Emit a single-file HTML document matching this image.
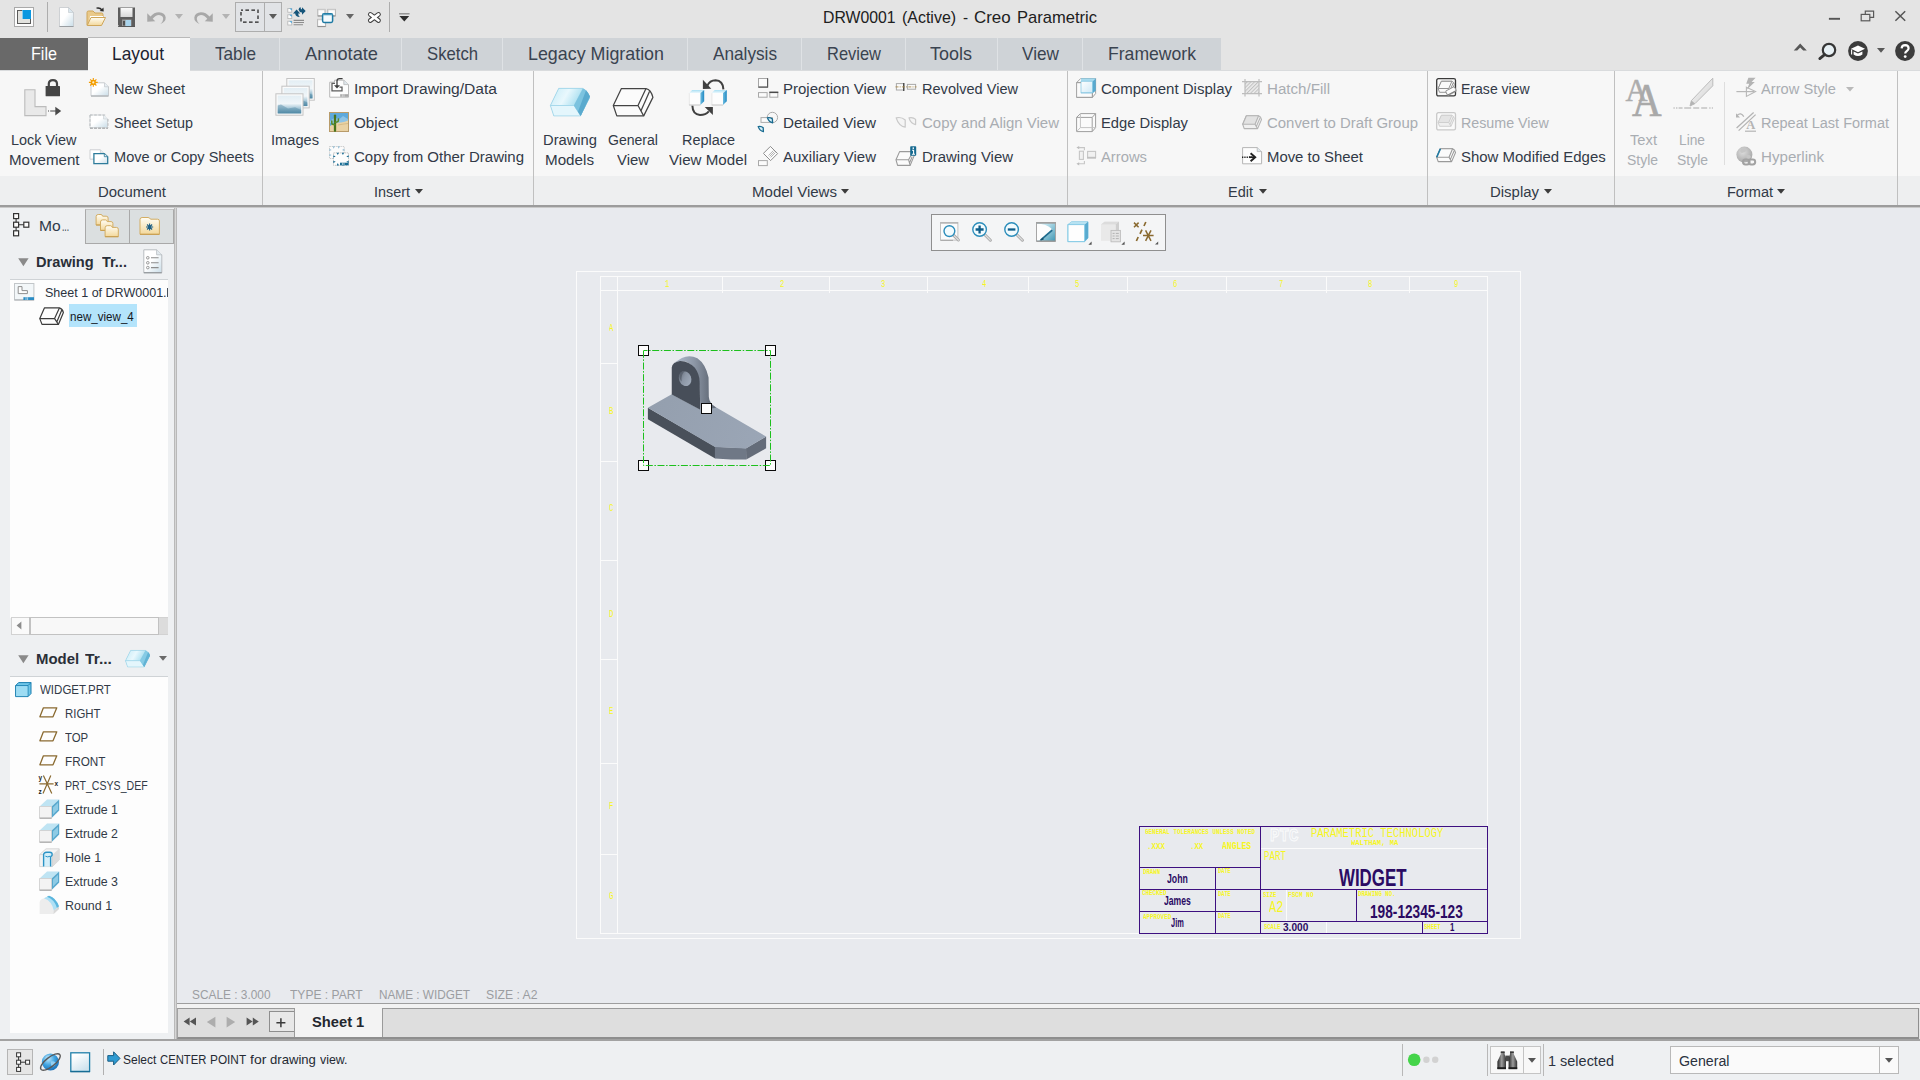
<!DOCTYPE html>
<html><head><meta charset="utf-8"><title>DRW0001 (Active) - Creo Parametric</title><style>
*{margin:0;padding:0;box-sizing:border-box}
html,body{width:1920px;height:1080px;overflow:hidden;background:#e4e4e4;font-family:"Liberation Sans",sans-serif;}
#root{position:relative;width:1920px;height:1080px;overflow:hidden}
.b{position:absolute}
.t{position:absolute;white-space:pre;transform-origin:0 50%;line-height:20px;height:20px;font-family:"Liberation Sans",sans-serif}
svg{position:absolute;overflow:visible}
</style></head><body><div id="root"><div class="b" style="left:0px;top:0px;width:1920px;height:38px;background:#e4e4e4;"></div><div class="b" style="left:0px;top:38px;width:1920px;height:33px;background:#e4e4e4;"></div><div class="b" style="left:0px;top:38px;width:88px;height:32px;background:#696969;"></div><div class="b" style="left:190px;top:38px;width:90px;height:32px;background:#cfd3d7;"></div><div class="b" style="left:280px;top:38px;width:122px;height:32px;background:#cfd3d7;"></div><div class="b" style="left:402px;top:38px;width:101px;height:32px;background:#cfd3d7;"></div><div class="b" style="left:503px;top:38px;width:185px;height:32px;background:#cfd3d7;"></div><div class="b" style="left:688px;top:38px;width:114px;height:32px;background:#cfd3d7;"></div><div class="b" style="left:802px;top:38px;width:104px;height:32px;background:#cfd3d7;"></div><div class="b" style="left:906px;top:38px;width:92px;height:32px;background:#cfd3d7;"></div><div class="b" style="left:998px;top:38px;width:85px;height:32px;background:#cfd3d7;"></div><div class="b" style="left:1083px;top:38px;width:138px;height:32px;background:#cfd3d7;"></div><div class="b" style="left:279px;top:38px;width:1px;height:32px;background:#dfe2e5;"></div><div class="b" style="left:401px;top:38px;width:1px;height:32px;background:#dfe2e5;"></div><div class="b" style="left:502px;top:38px;width:1px;height:32px;background:#dfe2e5;"></div><div class="b" style="left:687px;top:38px;width:1px;height:32px;background:#dfe2e5;"></div><div class="b" style="left:801px;top:38px;width:1px;height:32px;background:#dfe2e5;"></div><div class="b" style="left:905px;top:38px;width:1px;height:32px;background:#dfe2e5;"></div><div class="b" style="left:997px;top:38px;width:1px;height:32px;background:#dfe2e5;"></div><div class="b" style="left:1082px;top:38px;width:1px;height:32px;background:#dfe2e5;"></div><div class="b" style="left:0px;top:70px;width:1920px;height:1px;background:#d9dbdd;"></div><div class="b" style="left:88px;top:37px;width:102px;height:34px;background:#f7f7f7;border-top:1px solid #b9b9b9;"></div><div class="b" style="left:0px;top:71px;width:1920px;height:105px;background:#f7f7f7;"></div><div class="b" style="left:0px;top:176px;width:1920px;height:29px;background:#eeeff0;"></div><div class="b" style="left:0px;top:205px;width:1920px;height:2px;background:#9c9c9c;"></div><div class="b" style="left:0px;top:207px;width:1920px;height:1px;background:#c9c9c9;"></div><div class="b" style="left:262px;top:71px;width:1px;height:134px;background:#c0c0c0;"></div><div class="b" style="left:533px;top:71px;width:1px;height:134px;background:#c0c0c0;"></div><div class="b" style="left:1067px;top:71px;width:1px;height:134px;background:#c0c0c0;"></div><div class="b" style="left:1427px;top:71px;width:1px;height:134px;background:#c0c0c0;"></div><div class="b" style="left:1614px;top:71px;width:1px;height:134px;background:#c0c0c0;"></div><div class="b" style="left:1897px;top:71px;width:1px;height:134px;background:#c0c0c0;"></div><div class="b" style="left:177px;top:208px;width:1743px;height:796px;background:#e8eaee;"></div><div class="b" style="left:0px;top:208px;width:174px;height:832px;background:#eef0f2;"></div><div class="b" style="left:174px;top:208px;width:3px;height:832px;background:#b9b9b9;"></div><div class="b" style="left:175px;top:208px;width:1px;height:832px;background:#d6d6d6;"></div><div class="b" style="left:85px;top:209px;width:89px;height:35px;background:#dbdfe0;border:1px solid #a9a9a9;border-top-color:#c4c4c4;"></div><div class="b" style="left:129px;top:210px;width:1px;height:33px;background:#a9a9a9;"></div><div class="b" style="left:10px;top:279px;width:158px;height:339px;background:#fdfdfd;border-top:1px solid #cfd3d6;"></div><div class="b" style="left:11px;top:617px;width:157px;height:18px;background:#fafafa;border:1px solid #d2d2d2;"></div><div class="b" style="left:158px;top:618px;width:10px;height:16px;background:#dcdcdc;"></div><div class="b" style="left:29px;top:617px;width:130px;height:18px;background:#f8f8f8;border:1px solid #c2c2c2;border-left:2px solid #c2c2c2;"></div><div class="b" style="left:10px;top:676px;width:158px;height:357px;background:#fdfdfd;border-top:1px solid #cfd3d6;"></div><div class="b" style="left:69px;top:304px;width:68px;height:23px;background:#b4e4fb;"></div><div class="b" style="left:177px;top:1003px;width:1743px;height:1px;background:#9e9e9e;"></div><div class="b" style="left:177px;top:1004px;width:1743px;height:4px;background:#f2f2f2;"></div><div class="b" style="left:177px;top:1008px;width:1742px;height:31px;background:#dedede;border-top:1px solid #9a9a9a;border-left:1px solid #a2a2a2;border-right:1px solid #8e8e8e;border-bottom:2px solid #8e8e8e;"></div><div class="b" style="left:295px;top:1004px;width:87px;height:33px;background:#f3f3f3;"></div><div class="b" style="left:294px;top:1008px;width:1px;height:29px;background:#9a9a9a;"></div><div class="b" style="left:382px;top:1008px;width:1px;height:29px;background:#9a9a9a;"></div><div class="b" style="left:269px;top:1011px;width:25px;height:21px;background:#e8e8e8;border:1px solid #8e8e8e;border-right:none;"></div><div class="b" style="left:0px;top:1039px;width:1920px;height:2px;background:#a2a2a2;"></div><div class="b" style="left:0px;top:1041px;width:1920px;height:39px;background:#eef0f2;"></div><div class="b" style="left:103px;top:1049px;width:1px;height:26px;background:#b0b0b0;"></div><div class="b" style="left:1402px;top:1044px;width:1px;height:32px;background:#b8b8b8;"></div><div class="b" style="left:1487px;top:1044px;width:1px;height:32px;background:#b8b8b8;"></div><div class="b" style="left:1543px;top:1044px;width:1px;height:32px;background:#b8b8b8;"></div><div class="b" style="left:7px;top:1049px;width:26px;height:26px;background:#e6e6e6;border:1px solid #b5b5b5;"></div><div class="b" style="left:1490px;top:1046px;width:51px;height:28px;background:#f8f8f8;border:1px solid #c4c4c4;"></div><div class="b" style="left:1523px;top:1047px;width:1px;height:26px;background:#c4c4c4;"></div><div class="b" style="left:1670px;top:1046px;width:229px;height:28px;background:#fafafa;border:1px solid #b9b9b9;"></div><div class="b" style="left:1879px;top:1047px;width:1px;height:26px;background:#b9b9b9;"></div><div class="b" style="left:931px;top:214px;width:235px;height:37px;background:#f4f5f6;border:1px solid #8f8f8f;"></div><svg style="left:0;top:0" width="1920" height="1080" viewBox="0 0 1920 1080" shape-rendering="crispEdges"><g fill="none" stroke="#fbfbfb" stroke-width="1"><rect x="576.5" y="271.5" width="944" height="667"/><rect x="600.5" y="276.5" width="887" height="657"/><path d="M617.5 276.5V933.5 M600.5 290.5H1487.5"/><path d="M722.5 277V293"/><path d="M829.5 277V293"/><path d="M927.5 277V293"/><path d="M1028.5 277V293"/><path d="M1127.5 277V293"/><path d="M1226.5 277V293"/><path d="M1326.5 277V293"/><path d="M1409.5 277V293"/><path d="M600 363.5H618"/><path d="M600 461.5H618"/><path d="M600 560.5H618"/><path d="M600 659.5H618"/><path d="M600 763.5H618"/><path d="M600 854.5H618"/></g><g fill="none" stroke="#fbfbfb" stroke-width="1"><path d="M1261 848.5H1487 M1286.5 890V921 M1326.5 922V933"/></g><g fill="none" stroke="#3d1080" stroke-width="1"><rect x="1139.5" y="826.5" width="348" height="107"/><path d="M1260.5 826.5V933.5 M1139.5 867.5H1260.5 M1139.5 889.5H1487.5 M1139.5 911.5H1260.5 M1215.5 867.5V933.5 M1260.5 921.5H1487.5 M1356.5 889.5V921.5 M1422.5 921.5V933.5"/></g></svg><svg style="left:0;top:0" width="1920" height="1080" viewBox="0 0 1920 1080"><defs><linearGradient id="gLug" gradientUnits="userSpaceOnUse" x1="400" y1="0" x2="612" y2="0"><stop offset="0" stop-color="#a4afbf"/><stop offset="0.45" stop-color="#8d97a6"/><stop offset="1" stop-color="#666f7c"/></linearGradient><linearGradient id="gTop" gradientUnits="userSpaceOnUse" x1="140" y1="500" x2="1048" y2="800"><stop offset="0" stop-color="#949fae"/><stop offset="1" stop-color="#9ba6b6"/></linearGradient><linearGradient id="gHole" gradientUnits="userSpaceOnUse" x1="385" y1="250" x2="470" y2="350"><stop offset="0" stop-color="#626a76"/><stop offset="0.4" stop-color="#8b95a4"/><stop offset="1" stop-color="#a3aebd"/></linearGradient></defs><g transform="translate(630,340) scale(0.129633)"><path d="M138,522 L657,823 L657,914 L138,612Z" fill="#49505a"/><path d="M655,823 L897,835 L897,922 L780,922 L655,914Z" fill="#6f7886"/><path d="M895,835 L1050,745 L1050,836 L897,922Z" fill="#646c79"/><path d="M138,523 L322,418 L545,538 L640,505 L1050,745 L895,837 L655,825Z" fill="url(#gTop)"/><path d="M335,180 L400,138 Q460,110 520,140 Q585,185 606,290 L608,440 Q612,490 665,522 L545,540 L530,300 Q500,200 440,170 Q385,155 335,180Z" fill="url(#gLug)"/><path d="M322,420 L322,215 Q325,172 385,162 Q450,160 500,215 Q535,262 537,320 L542,538Z" fill="#474e59"/><ellipse cx="425" cy="298" rx="47" ry="59" transform="rotate(-22 425 298)" fill="url(#gHole)"/><path d="M382,262 Q395,238 425,240 Q392,262 398,320 Q378,298 382,262Z" fill="#565e6a" opacity="0.8"/></g></svg><svg style="left:0;top:0" width="1920" height="1080" viewBox="0 0 1920 1080" shape-rendering="crispEdges"><rect x="638.7" y="345.7" width="9.6" height="9.6" fill="#fdfdfd" stroke="#0a0a0a" stroke-width="1.4"/><rect x="765.7" y="345.7" width="9.6" height="9.6" fill="#fdfdfd" stroke="#0a0a0a" stroke-width="1.4"/><rect x="638.7" y="460.7" width="9.6" height="9.6" fill="#fdfdfd" stroke="#0a0a0a" stroke-width="1.4"/><rect x="765.7" y="460.7" width="9.6" height="9.6" fill="#fdfdfd" stroke="#0a0a0a" stroke-width="1.4"/><rect x="701.7" y="403.7" width="9.6" height="9.6" fill="#fdfdfd" stroke="#0a0a0a" stroke-width="1.4"/><rect x="643.5" y="350.5" width="127" height="115" fill="none" stroke="#1cc01c" stroke-width="1" stroke-dasharray="7 1.6 1.5 1.6" stroke-dashoffset="3" shape-rendering="auto"/></svg><svg width="0" height="0" style="left:0;top:0"><defs>
<linearGradient id="gPage" x1="0" y1="0" x2="1" y2="1"><stop offset="0.45" stop-color="#ffffff"/><stop offset="1" stop-color="#c9dde8"/></linearGradient>
<linearGradient id="gFold" x1="0" y1="0" x2="0" y2="1"><stop offset="0" stop-color="#fffdf5"/><stop offset="1" stop-color="#f3d89b"/></linearGradient>
<linearGradient id="gCube" x1="0" y1="0" x2="1" y2="1"><stop offset="0" stop-color="#ffffff"/><stop offset="1" stop-color="#cfe9f6"/></linearGradient>
<linearGradient id="gBlue" x1="0" y1="0" x2="1" y2="1"><stop offset="0" stop-color="#e8f7fd"/><stop offset="1" stop-color="#9bd6ef"/></linearGradient>
<linearGradient id="gPic" x1="0" y1="0" x2="0" y2="1"><stop offset="0" stop-color="#e3eef4"/><stop offset="0.45" stop-color="#f1f6f9"/><stop offset="0.7" stop-color="#a9c9d9"/><stop offset="1" stop-color="#4f8aa6"/></linearGradient>
<linearGradient id="gGrey" x1="0" y1="0" x2="0" y2="1"><stop offset="0" stop-color="#fafafa"/><stop offset="1" stop-color="#d8d8d8"/></linearGradient>
</defs></svg><svg style="left:14px;top:7px" width="20" height="20" viewBox="0 0 20 20"><rect x="0.5" y="0.5" width="19" height="19" fill="#fdfdfd" stroke="#a9a9a9"/><rect x="3.5" y="3.5" width="13" height="13" fill="#e2e2de" stroke="#5a5a5a"/><rect x="8" y="3" width="9" height="9" fill="#0b97e0"/><path d="M8.5 3.5V12" stroke="#bfe3f7" stroke-width="0.7"/></svg><div class="b" style="left:47px;top:2px;width:1px;height:30px;background:#adadad"></div><svg style="left:59px;top:7px" width="15" height="20" viewBox="0 0 15 20"><path d="M0.5 0.5H9.5 L14.5 5.5 V19.5 H0.5Z" fill="url(#gPage)" stroke="#c4c8cc" stroke-width="0.8"/><path d="M9.5 0.5V5.5 H14.5 Z" fill="#dbe7ee" stroke="#c0c6cb" stroke-width="0.6"/><path d="M0.5 19.5 H14.5" stroke="#9a9ea2" stroke-width="1"/></svg><svg style="left:86px;top:7px" width="20" height="20" viewBox="0 0 20 20"><path d="M1 18V5.5Q1 4 2.5 4H7l2 2h6.5Q17 6 17 7.5V10" fill="#e9c98a" stroke="#cfa65a" stroke-width="1"/><path d="M4 9h13v8H3z" fill="#fff"/><path d="M1.2 18.5 L5 10.5H19.5L15.5 18.5Z" fill="url(#gFold)" stroke="#cfa65a" stroke-width="1" stroke-linejoin="round"/><path d="M10.5 1.2Q14 0.4 16 3" fill="none" stroke="#2b2b2b" stroke-width="1.3"/><path d="M13.7 3.9L17.7 4.6L17.5 0.6Z" fill="#2b2b2b"/></svg><svg style="left:117px;top:7px" width="19" height="20" viewBox="0 0 19 20"><path d="M1 0.5H18V19.5H2.5L1 18Z" fill="#5d5d5d"/><rect x="3.5" y="1" width="12" height="9" fill="url(#gGrey)"/><rect x="5" y="12.5" width="9.5" height="7" fill="#9a9a9a"/><rect x="8.5" y="13" width="5.5" height="6.5" fill="#a9d4ec"/><rect x="6.3" y="14" width="1.4" height="4.5" fill="#333"/><path d="M1 19.5H18" stroke="#444" stroke-width="0.8"/></svg><svg style="left:147px;top:11px" width="19" height="14" viewBox="0 0 19 14"><path d="M0.25 2.25V10.75L8.25 10.25L5.7 7.7Q8.5 3.9 12 3.9Q16.3 4.4 16.2 8Q16 11 13.4 13Q18.9 11 18.7 6.6Q18 1.4 12 1.2Q7 1.2 3.5 5.5Z" fill="#a8a8a8"/></svg><svg style="left:194px;top:11px" width="19" height="14" viewBox="0 0 19 14"><g transform="translate(19,0) scale(-1,1)"><path d="M0.25 2.25V10.75L8.25 10.25L5.7 7.7Q8.5 3.9 12 3.9Q16.3 4.4 16.2 8Q16 11 13.4 13Q18.9 11 18.7 6.6Q18 1.4 12 1.2Q7 1.2 3.5 5.5Z" fill="#a8a8a8"/></g></svg><svg style="left:175px;top:14.2px" width="8" height="5" viewBox="0 0 8 5"><path d="M0 0H8L4 5Z" fill="#b3b3b3"/></svg><svg style="left:222px;top:14.2px" width="8" height="5" viewBox="0 0 8 5"><path d="M0 0H8L4 5Z" fill="#b3b3b3"/></svg><div class="b" style="left:235px;top:2px;width:47px;height:30px;background:#e1e3e6;border:1px solid #adadad"></div><div class="b" style="left:264px;top:3px;width:1px;height:28px;background:#adadad"></div><svg style="left:240px;top:9px" width="19" height="14" viewBox="0 0 19 14"><rect x="1" y="1" width="17" height="12" fill="none" stroke="#222" stroke-width="1.25" stroke-dasharray="3.6 2.4" stroke-dashoffset="1.6"/></svg><svg style="left:269px;top:14.2px" width="8" height="5" viewBox="0 0 8 5"><path d="M0 0H8L4 5Z" fill="#5a5a5a"/></svg><svg style="left:287px;top:7px" width="19" height="19" viewBox="0 0 19 19"><g fill="#fdfdfd" stroke="#b5b5b5" stroke-width="0.8"><rect x="0.8" y="1.4" width="4" height="3.8"/><rect x="0.8" y="7.8" width="4" height="3.8"/><rect x="0.8" y="14.2" width="4" height="3.8"/></g><g fill="#3aa3e0"><path d="M2.4 1.4H4.8V3.4Z"/><path d="M2.4 7.8H4.8V9.8Z"/><path d="M2.4 14.2H4.8V16.2Z"/></g><g stroke="#8c8c8c" stroke-width="1.1"><path d="M6.6 13.4H17M6.6 15.5H17M6.6 17.7H16"/></g><path d="M9.6 2.4L13.2 6.4H11.2Q11.2 8.6 12.8 9.9Q8.4 9.6 8.2 6.4H6Z" fill="#16557a"/><path d="M18.7 4L15 7.8V5.5Q12.2 5.3 11.5 2.6Q12 0.7 13.4 0.1Q13.5 2.4 15 2.6V0.3Z" fill="#16557a"/></svg><svg style="left:317px;top:8px" width="19" height="19" viewBox="0 0 19 19"><g fill="#fcfcfc" stroke="#b2b2b2" stroke-width="1"><rect x="0.8" y="1.4" width="7.2" height="6.4"/><rect x="10.8" y="1.4" width="7.6" height="6.4"/><rect x="0.6" y="11.4" width="8" height="7"/></g><path d="M0.8 8H8M10.8 8H18.4M0.6 18.6H8.6" stroke="#8e8e8e" stroke-width="1"/><path d="M0.8 1.6H8M10.8 1.6H18.4M0.6 11.6H8.6" stroke="#c9c9c9" stroke-width="1.4"/><rect x="5.6" y="5.8" width="10" height="8.6" rx="1.4" fill="#f4fafd" stroke="#1f7aa3" stroke-width="1.5"/><path d="M5.6 6.6H15.6" stroke="#4c9cc0" stroke-width="1.4"/></svg><svg style="left:346px;top:14.2px" width="8" height="5" viewBox="0 0 8 5"><path d="M0 0H8L4 5Z" fill="#666"/></svg><svg style="left:367px;top:11px" width="15" height="13" viewBox="0 0 15 13"><path d="M3.3 3.4L11.5 9.5M11.5 3.4L3.3 9.5" stroke="#404040" stroke-width="4.7" stroke-linecap="round"/><path d="M3.3 3.4L11.5 9.5M11.5 3.4L3.3 9.5" stroke="#fff" stroke-width="2.7" stroke-linecap="round"/></svg><div class="b" style="left:389px;top:2px;width:1px;height:30px;background:#adadad"></div><svg style="left:399px;top:13px" width="11" height="9" viewBox="0 0 11 9"><path d="M0 0.8H10.6" stroke="#8a8a8a" stroke-width="1.3"/><path d="M0.4 3H10.2L5.3 8.6Z" fill="#2e2e2e"/></svg><svg style="left:22px;top:78px" width="42" height="40" viewBox="0 0 42 40"><path d="M2.8 11.8H13V28.6H24V37.6H2.8Z" fill="#e9e9e9" stroke="#bcbcbc" stroke-width="1.1"/><rect x="23.6" y="7.9" width="14.4" height="10.4" rx="0.6" fill="#454545"/><path d="M26.8 8.5V5.8Q26.8 2.2 30.9 2.2Q35 2.2 35 5.8V8.5" fill="none" stroke="#454545" stroke-width="2.2"/><path d="M26 33H34" stroke="#4a4a4a" stroke-width="1.2" stroke-dasharray="1 1.2 5 0"/><path d="M33.3 28.7V37.5L39.2 33.1Z" fill="#4a4a4a"/></svg><svg style="left:89px;top:78px" width="21" height="19" viewBox="0 0 21 19"><g transform="translate(1.5,4.3)"><path d="M0.5 0.5H14 L18 4.5 V13.5 H0.5Z" fill="url(#gPage)" stroke="#c2c6ca" stroke-width="0.9"/><path d="M14 0.5V4.5 H18" fill="#e7eef2" stroke="#c2c6ca" stroke-width="0.7"/><path d="M0.5 13.8H18" stroke="#a5a9ad" stroke-width="1"/></g><g transform="translate(4.3,4.4)"><circle r="2.6" fill="#f6a800"/><g stroke="#f39a00" stroke-width="1.1"><path d="M-4.4 0H4.4M0 -4.4V4.4M-3.1 -3.1L3.1 3.1M-3.1 3.1L3.1 -3.1"/></g><circle r="1.1" fill="#fff3c8"/></g></svg><svg style="left:88.5px;top:113.8px" width="20" height="15" viewBox="0 0 20 15"><g transform="translate(0.5,0.5)"><path d="M0.5 0.5H14 L18 4.5 V13.1 H0.5Z" fill="url(#gPage)" stroke="#cfd2d5" stroke-width="0.9"/><path d="M14 0.5V4.5 H18" fill="#e7eef2" stroke="#cfd2d5" stroke-width="0.7"/></g><path d="M1 1H17M1 1V14M1 14.2H19M19 5V14" fill="none" stroke="#b9bdc0" stroke-width="1" stroke-dasharray="2.6 1.6"/><path d="M1 14.2H19" stroke="#a6a9ac" stroke-width="1" stroke-dasharray="3 1"/></svg><svg style="left:88.5px;top:149px" width="20" height="16" viewBox="0 0 20 16"><g transform="translate(0.5,0.3)"><path d="M0.5 0.5H10.9 L14.1 3.7 V9.9 H0.5Z" fill="url(#gPage)" stroke="#c8cbce" stroke-width="0.9"/><path d="M10.9 0.5V3.7 H14.1" fill="#e7eef2" stroke="#c8cbce" stroke-width="0.7"/></g><g transform="translate(4.3,4.1)"><path d="M0.6 0.6H11 L14.4 3.6 V10.6 H0.6Z" fill="url(#gPage)" stroke="#2e7c9b" stroke-width="1.3"/><path d="M11 0.6V3.6H14.4" fill="#e7eef2" stroke="#2e7c9b" stroke-width="0.8"/></g></svg><svg style="left:275px;top:78px" width="41" height="39" viewBox="0 0 41 39"><g transform="translate(11.3,0)"><rect x="0.5" y="0.5" width="27.5" height="21.7" fill="#fbfbfb" stroke="#c4c4c4" stroke-width="1"/><rect x="2.3" y="2.3" width="23.9" height="18.1" fill="url(#gPic)"/><path d="M2.3 12.485 L5.7 11.35 L12.825 15.436 L19.95 14.074 L26.2 16.798 V20.4 H2.3Z" fill="#4f87a3" opacity="0.45"/></g><g transform="translate(6.4,7.7)"><rect x="0.5" y="0.5" width="27.3" height="21.7" fill="#fbfbfb" stroke="#c4c4c4" stroke-width="1"/><rect x="2.3" y="2.3" width="23.7" height="18.1" fill="url(#gPic)"/><path d="M2.3 12.485 L5.66 11.35 L12.735 15.436 L19.81 14.074 L26 16.798 V20.4 H2.3Z" fill="#4f87a3" opacity="0.45"/></g><g transform="translate(0.4,15.3)"><rect x="0.5" y="0.5" width="27.1" height="21.4" fill="#fbfbfb" stroke="#c4c4c4" stroke-width="1"/><rect x="2.3" y="2.3" width="23.5" height="17.8" fill="url(#gPic)"/><path d="M2.3 12.32 L5.62 11.2 L12.645 15.232 L19.67 13.888 L25.8 16.576 V20.1 H2.3Z" fill="#4f87a3" opacity="0.45"/></g></svg><svg style="left:329px;top:78px" width="21" height="21" viewBox="0 0 21 21"><path d="M0.7 4.2H5.5V2.2H14.8L19.5 6.6V19.2H0.7Z" fill="#fdfdfd" stroke="#b9b9b9" stroke-width="1"/><path d="M14.8 2.2V6.6H19.5" fill="#dfe7ec" stroke="#b9b9b9" stroke-width="0.8"/><path d="M6 5.3H3V12.8H13V9.2H10.5" fill="none" stroke="#5e5e5e" stroke-width="1.3"/><path d="M13.6 0.7H10.4Q8 0.7 8 3V8.5" fill="none" stroke="#3c3c3c" stroke-width="1.3"/><path d="M5 7.2H11L8 10.6Z" fill="#3c3c3c"/><rect x="11.2" y="16.2" width="8" height="2.6" fill="#a8a8a8"/><path d="M13.3 16.2V18.8M15 16.2V18.8" stroke="#e8e8e8" stroke-width="0.7"/></svg><svg style="left:329px;top:112px" width="20" height="20" viewBox="0 0 20 20"><rect x="0.5" y="0.5" width="19" height="19" fill="#5da9dc" stroke="#b89b6a" stroke-width="1"/><path d="M1 9 L6 5.5 L10 7.5 L14 4 L19 7 V11H1Z" fill="#8cc3e6"/><path d="M1 14 Q6 10.5 12 10.5 Q16 10.2 19 8.5 V19H1Z" fill="#e9d2a4"/><path d="M9 13 Q14 12 19 11.5" stroke="#cfb582" fill="none" stroke-width="0.8"/><path d="M6 3.6V18.8" stroke="#48741c" stroke-width="2.3" stroke-linecap="round"/><path d="M2.8 9V11.2Q2.8 12.6 6 12.8" fill="none" stroke="#5a8a26" stroke-width="1.5" stroke-linecap="round"/><path d="M9.4 7V8.6Q9.4 10 6 10.4" fill="none" stroke="#5a8a26" stroke-width="1.5" stroke-linecap="round"/></svg><svg style="left:329px;top:146px" width="21" height="20" viewBox="0 0 21 20"><g opacity="0.8"><rect x="0.5" y="0.5" width="14.7" height="12" fill="#fdfdfd" stroke="#b4b4b4" stroke-width="0.8" stroke-dasharray="1.4 0.8"/><path d="M3.51 0.3l1.2 2.4l1.2-2.4Z M3.51 12.7l1.2-2.4l1.2 2.4Z" fill="#7fb1cc"/><path d="M8.534 0.3l1.2 2.4l1.2-2.4Z M8.534 12.7l1.2-2.4l1.2 2.4Z" fill="#7fb1cc"/><path d="M0.3 2.8l2.4 1.1l-2.4 1.1Z M15.4 2.8l-2.4 1.1l2.4 1.1Z" fill="#7fb1cc"/><path d="M0.3 8l2.4 1.1l-2.4 1.1Z M15.4 8l-2.4 1.1l2.4 1.1Z" fill="#7fb1cc"/></g><g transform="translate(4,6.4)"><g opacity="1"><rect x="0.5" y="0.5" width="15" height="12.4" fill="#fdfdfd" stroke="#b4b4b4" stroke-width="0.8" stroke-dasharray="1.4 0.8"/><path d="M3.6 0.3l1.2 2.4l1.2-2.4Z M3.6 13.1l1.2-2.4l1.2 2.4Z" fill="#176b93"/><path d="M8.72 0.3l1.2 2.4l1.2-2.4Z M8.72 13.1l1.2-2.4l1.2 2.4Z" fill="#176b93"/><path d="M0.3 2.92l2.4 1.1l-2.4 1.1Z M15.7 2.92l-2.4 1.1l2.4 1.1Z" fill="#176b93"/><path d="M0.3 8.28l2.4 1.1l-2.4 1.1Z M15.7 8.28l-2.4 1.1l2.4 1.1Z" fill="#176b93"/></g><rect x="7" y="10.3" width="8.6" height="2.6" fill="#176b93"/><path d="M9.4 10.3V12.9M11 10.3V12.9" stroke="#e8f3f8" stroke-width="0.7"/></g></svg><svg style="left:548px;top:84px" width="46" height="36" viewBox="0 0 46 36"><defs><linearGradient id="gSlabT" x1="0" y1="0" x2="1" y2="0.3"><stop offset="0" stop-color="#c4ebf7"/><stop offset="0.55" stop-color="#e9f8fd"/><stop offset="1" stop-color="#a9dff0"/></linearGradient></defs><path d="M10.7 4.4H35 Q43 10.5 41.8 14 L32.7 31.9 H5.8 L2.4 21.5Z" fill="#6cb9d8"/><path d="M10.7 4.4H35L26 21.5H2.4Z" fill="url(#gSlabT)" stroke="#9fd6ea" stroke-width="0.8"/><path d="M2.4 21.5H26L32.7 31.9H5.8Z" fill="#e4f6fc" stroke="#9fd6ea" stroke-width="0.8"/><path d="M35 4.4 Q38.5 5 41.8 12.6 L32.7 31.9 L26 21.5Z" fill="#7cc3df"/><path d="M38 6.2 Q40.8 9 41.8 12.6 L32.7 31.9 L30 27.8Z" fill="#5aaace"/></svg><svg style="left:611px;top:84px" width="46" height="36" viewBox="0 0 46 36"><g fill="#fbfbfb" stroke="#444" stroke-width="1.25" stroke-linejoin="round"><path d="M10.4 4.6H35 Q40 5.5 41.9 13.4 L32.7 31.9 H5.8 L2.3 21.5Z"/><path d="M2.3 21.5H27L35 4.6M27 21.5L32.7 31.9" fill="none"/><path d="M38.6 7.2 L30 26.8" fill="none"/></g></svg><svg style="left:687px;top:77px" width="42" height="42" viewBox="0 0 42 42"><g transform="translate(2.1,13)"><defs><linearGradient id="gCt" x1="0" y1="0" x2="0" y2="1"><stop offset="0" stop-color="#a9dff4"/><stop offset="1" stop-color="#eef9fd"/></linearGradient><linearGradient id="gCr" x1="0" y1="0" x2="1" y2="0"><stop offset="0" stop-color="#6fbde0"/><stop offset="1" stop-color="#1f88c2"/></linearGradient></defs><path d="M0 3.1L3 0H15.1V11.2L11.3 14.9H0Z" fill="#fdfdfd"/><path d="M0 3.1L3 0H15.1L11.3 3.1Z" fill="url(#gCt)"/><path d="M11.3 3.1L15.1 0V11.2L11.3 14.9Z" fill="url(#gCr)"/><path d="M0.2 3.1V14.9" stroke="#d9d9d9" stroke-width="0.6"/><path d="M0 15H11.3" stroke="#bdbdbd" stroke-width="0.9"/></g><g transform="translate(24.7,13)"><defs><linearGradient id="gCt" x1="0" y1="0" x2="0" y2="1"><stop offset="0" stop-color="#a9dff4"/><stop offset="1" stop-color="#eef9fd"/></linearGradient><linearGradient id="gCr" x1="0" y1="0" x2="1" y2="0"><stop offset="0" stop-color="#6fbde0"/><stop offset="1" stop-color="#1f88c2"/></linearGradient></defs><path d="M0 3.1L3 0H15.1V11.2L11.3 14.9H0Z" fill="#fdfdfd"/><path d="M0 3.1L3 0H15.1L11.3 3.1Z" fill="url(#gCt)"/><path d="M11.3 3.1L15.1 0V11.2L11.3 14.9Z" fill="url(#gCr)"/><path d="M0.2 3.1V14.9" stroke="#d9d9d9" stroke-width="0.6"/><path d="M0 15H11.3" stroke="#bdbdbd" stroke-width="0.9"/></g><path d="M20.4 8.6Q22.6 3.5 28.6 3.3Q36 3.6 36.4 12.4" fill="none" stroke="#404040" stroke-width="2"/><path d="M15.9 2.8V11.9L24.3 11.7Z" fill="#404040"/><path d="M5.4 28.8Q5.6 37.4 13 38Q18.8 38 21.8 34.4" fill="none" stroke="#404040" stroke-width="2"/><path d="M17.7 30.1H25.9V38.1Z" fill="#404040"/></svg><svg style="left:757px;top:77px" width="22" height="21" viewBox="0 0 22 21"><rect x="1.5" y="1.5" width="9" height="8.6" fill="#fbfbfb" stroke="#a6a6a6" stroke-width="1"/><path d="M10.6 1.2V10.4M1.4 10.2H11" stroke="#595959" stroke-width="1.2" fill="none"/><rect x="1.5" y="15.6" width="8.6" height="4.6" fill="#fbfbfb" stroke="#a9a9a9" stroke-width="1"/><rect x="12.8" y="15.6" width="8" height="4.6" fill="#fbfbfb" stroke="#a9a9a9" stroke-width="1"/><path d="M12.3 15.3H21.3" stroke="#4a4a4a" stroke-width="1.5"/></svg><svg style="left:757px;top:111px" width="23" height="22" viewBox="0 0 23 22"><circle cx="15.4" cy="6.5" r="5.2" fill="none" stroke="#ababab" stroke-width="1"/><rect x="4" y="6.6" width="11.4" height="4.8" fill="#fbfbfb" stroke="#ababab" stroke-width="1"/><path d="M0 0 Q3.2 -0.6 5 1.2 L5.2 5 Q1.6 4.4 0 0Z" transform="translate(10.4,6.8)" fill="#d8eef7" stroke="#176a90" stroke-width="1.3" stroke-linejoin="round"/><path d="M0 0 Q3.2 -0.6 5 1.2 L5.2 5 Q1.6 4.4 0 0Z" transform="translate(1.2,15.6)" fill="#d8eef7" stroke="#176a90" stroke-width="1.3" stroke-linejoin="round"/></svg><svg style="left:757px;top:145px" width="23" height="22" viewBox="0 0 23 22"><path d="M13.4 1.4L20.6 8.6L13.6 15.6L6.4 8.4Z" fill="#fbfbfb" stroke="#8d8d8d" stroke-width="1"/><path d="M11.5 10.4L16.4 5.6M12.6 11.4L17.4 6.6M13.6 12.4L18.4 7.6" stroke="#a2a2a2" stroke-width="0.8"/><rect x="1.5" y="15.6" width="8.8" height="5" fill="#fbfbfb" stroke="#a9a9a9" stroke-width="1"/></svg><svg style="left:895px;top:82px" width="22" height="11" viewBox="0 0 22 11"><rect x="1.4" y="1.6" width="7.6" height="6.4" fill="#fbfbfb" stroke="#a9a9a9" stroke-width="1"/><rect x="12.4" y="2.4" width="8.2" height="4.8" fill="#fbfbfb" stroke="#a9a9a9" stroke-width="1"/><path d="M8.7 1V9" stroke="#4a4a4a" stroke-width="1.3"/><path d="M0.5 4.9H21.5" stroke="#a88a4c" stroke-width="0.9" stroke-dasharray="3 1.2 1 1.2"/></svg><svg style="left:895px;top:116px" width="22" height="13" viewBox="0 0 22 13"><path d="M1.2 1.8 Q6.6 0.6 10.2 4 V11.2 Q3.6 9.8 1.2 1.8Z" fill="#f4f4f4" stroke="#c9c9c9" stroke-width="1.2" stroke-linejoin="round"/><path d="M14 1.8 Q18 0.8 20.6 3.4 V8.6 Q15.6 7.4 14 1.8Z" fill="#f4f4f4" stroke="#c9c9c9" stroke-width="1.2" stroke-linejoin="round"/></svg><svg style="left:895px;top:145px" width="23" height="22" viewBox="0 0 23 22"><g fill="#fbfbfb" stroke="#9a9a9a" stroke-width="1.1" stroke-linejoin="round"><path d="M4.6 6.6H18.4L19.6 9.6 L15.2 20.4 H2.6 L1 14.8Z"/><path d="M1 14.8H13.6L18 6.8M13.6 14.8L15.2 20.4M17.2 11.6L14.6 17.8" fill="none"/></g><rect x="15.2" y="1.2" width="6" height="9.6" rx="0.8" fill="#166a90"/><path d="M17 5.2H18.6V9.2M16.9 9.3H20" stroke="#fff" stroke-width="1.1" fill="none"/><rect x="17.6" y="2.4" width="1.4" height="1.5" fill="#fff"/></svg><svg style="left:1076px;top:78px" width="21" height="21" viewBox="0 0 21 21"><g fill="none" stroke="#a2a2a2" stroke-width="1" stroke-linejoin="round"><path d="M0.6 4.6L4.6 0.6H19.6V15.6L16.4 19.4H0.6Z" fill="#fbfbfb"/><path d="M0.6 4.6H16.4V19.4M16.4 4.6L19.6 0.6"/></g><path d="M5 0.4H19.8V12.8L16.6 15.2H5Z" fill="#58a9cf"/><path d="M5 0.4H19.8L16.6 3.6H5Z" fill="#a8dbee"/><rect x="5" y="3.2" width="11.6" height="11.6" fill="url(#gCube)" stroke="#7cc4e0" stroke-width="0.7"/><path d="M0.6 4.6H5M0.6 19.4H16.4V15.4" fill="none" stroke="#a2a2a2" stroke-width="1"/></svg><svg style="left:1076px;top:113px" width="21" height="20" viewBox="0 0 21 20"><g fill="none" stroke="#9e9e9e" stroke-width="1" stroke-linejoin="round"><path d="M0.6 4.4L4.4 0.6H19.6V14.6L16.2 18.6H0.6Z" fill="#fbfbfb"/><path d="M0.6 4.4H16.2V18.6M16.2 4.4L19.6 0.6"/><path d="M4.4 0.6V14.6H19.6M4.4 14.6L0.6 18.6" stroke="#c4c4c4"/></g></svg><svg style="left:1076px;top:146px" width="21" height="20" viewBox="0 0 21 20"><g fill="none" stroke="#c6c6c6" stroke-width="1.1"><rect x="3.4" y="5.2" width="4" height="8.2" fill="#f1f1f1"/><rect x="11.6" y="5.4" width="8" height="6" fill="#f1f1f1"/><path d="M11 11.8H20" stroke-width="1.8" stroke="#c0c0c0"/><path d="M2 1.6H8.4V4.2M2 17.8H8.4V15"/></g><path d="M0.4 1.6L3.2 0V3.2Z M0.4 17.8L3.2 16.2V19.4Z" fill="#bdbdbd"/></svg><svg style="left:1242px;top:79px" width="20" height="18" viewBox="0 0 20 18"><defs><pattern id="ht" width="2.6" height="2.6" patternUnits="userSpaceOnUse" patternTransform="rotate(-45)"><rect width="2.6" height="1.1" fill="#c2c2c2"/></pattern></defs><rect x="3" y="2.6" width="14" height="12" fill="#ededed"/><rect x="3" y="2.6" width="14" height="12" fill="url(#ht)"/><path d="M0 2.6H20M0 14.6H20M3 0V17.4M17 0V17.4" stroke="#bdbdbd" stroke-width="1.2"/></svg><svg style="left:1242px;top:114.5px" width="21" height="15" viewBox="0 0 21 15"><g stroke="#b4b4b4" stroke-width="1.1" stroke-linejoin="round"><path d="M4.4 0.8H16.6 Q19 1.6 19.5 4.6 L15.6 13.6 H2.2 L0.7 9.2Z" fill="#f0f0f0"/><path d="M4.4 0.8H16.6L13 9.2H0.7Z" fill="#e2e2e2"/><path d="M13 9.2L15.6 13.6M18.2 2.6L14.4 11.4" fill="none"/></g></svg><svg style="left:1242px;top:147px" width="21" height="18" viewBox="0 0 21 18"><path d="M0.6 0.6H15.2L19.6 4.6V16.8H0.6Z" fill="#fdfdfd" stroke="#b5b5b5" stroke-width="1"/><path d="M15.2 0.6V4.6H19.6" fill="#dde7ec" stroke="#b5b5b5" stroke-width="0.8"/><path d="M0 10.2H10" stroke="#222" stroke-width="1.5" stroke-dasharray="1.3 1"/><path d="M8.6 6.2L13.2 10.2L8.6 14.2" fill="none" stroke="#222" stroke-width="1.9"/><path d="M7 10.2H12" stroke="#222" stroke-width="1.7"/></svg><svg style="left:1436px;top:78px" width="21" height="20" viewBox="0 0 21 20"><rect x="0.7" y="0.7" width="18.8" height="17.2" rx="1.6" fill="#fafafa" stroke="#3a3a3a" stroke-width="1.3"/><g transform="translate(1.6,2.6) scale(0.86)"><g stroke="#8e8e8e" stroke-width="1.1" stroke-linejoin="round"><path d="M4.4 0.8H16.6 Q19 1.6 19.5 4.6 L15.6 13.6 H2.2 L0.7 9.2Z" fill="#fbfbfb"/><path d="M4.4 0.8H16.6L13 9.2H0.7Z" fill="#fbfbfb"/><path d="M13 9.2L15.6 13.6M18.2 2.6L14.4 11.4" fill="none"/></g></g><g transform="translate(9.4,13.2) rotate(-28)"><rect x="0" y="0" width="10" height="5" rx="1.2" fill="#fdfdfd" stroke="#8e8e8e" stroke-width="0.9"/><path d="M0.4 4.4H9.6" stroke="#777" stroke-width="0.9"/></g></svg><svg style="left:1436px;top:112px" width="21" height="20" viewBox="0 0 21 20"><rect x="0.7" y="0.7" width="18.8" height="17.2" rx="1.6" fill="#fafafa" stroke="#c9c9c9" stroke-width="1.3"/><g transform="translate(1.6,2.6) scale(0.86)"><g stroke="#cdcdcd" stroke-width="1.1" stroke-linejoin="round"><path d="M4.4 0.8H16.6 Q19 1.6 19.5 4.6 L15.6 13.6 H2.2 L0.7 9.2Z" fill="#efefef"/><path d="M4.4 0.8H16.6L13 9.2H0.7Z" fill="#e4e4e4"/><path d="M13 9.2L15.6 13.6M18.2 2.6L14.4 11.4" fill="none"/></g></g></svg><svg style="left:1436px;top:148px" width="21" height="16" viewBox="0 0 21 16"><g stroke="#9a9a9a" stroke-width="1.1" stroke-linejoin="round"><path d="M4.4 0.8H16.6 Q19 1.6 19.5 4.6 L15.6 13.6 H2.2 L0.7 9.2Z" fill="#fbfbfb"/><path d="M4.4 0.8H16.6L13 9.2H0.7Z" fill="#fbfbfb"/><path d="M13 9.2L15.6 13.6M18.2 2.6L14.4 11.4" fill="none"/><path d="M4.4 0.8L0.7 9.2" stroke="#1f7aa3" stroke-width="1.6"/></g></svg><div class="t" style="left:1625.6px;top:71.2px;font-family:'Liberation Serif',serif;font-size:30.5px;line-height:40px;height:40px;color:#adadad;-webkit-text-stroke:0.5px #adadad">A</div><div class="t" style="left:1631.5px;top:75.6px;font-family:'Liberation Serif',serif;font-size:45.5px;line-height:50px;height:50px;color:#a9a9a9;-webkit-text-stroke:0.6px #a9a9a9;transform:scaleX(0.9)">A</div><svg style="left:1673px;top:76px" width="42" height="36" viewBox="0 0 42 36"><path d="M0.4 32H40" stroke="#c4c4c4" stroke-width="1.6" stroke-dasharray="1.4 1.2 1.4 1.2 4 1.6 7 2 6 2 6 2"/><defs><linearGradient id="gPen" x1="0" y1="0" x2="1" y2="1"><stop offset="0" stop-color="#fbfbfb"/><stop offset="1" stop-color="#cfcfcf"/></linearGradient></defs><path d="M39.8 2.2V9.8L22 27.6L17 30L18.4 24.6Z" fill="url(#gPen)" stroke="#bcbcbc" stroke-width="1"/><path d="M17 30L18.4 24.6L22 27.6Z" fill="#b4b4b4"/></svg><div class="b" style="left:1724px;top:82px;width:1px;height:83px;background:#dedede"></div><svg style="left:1736px;top:77px" width="21" height="21" viewBox="0 0 21 21"><path d="M0.4 14.6H18" stroke="#b8b8b8" stroke-width="1.2"/><path d="M10.4 10.2L19.6 14.6L10.4 19.4Z" fill="none" stroke="#b8b8b8" stroke-width="1.1"/><path d="M12.4 0.8H19.6L15.6 5H18.8L11 12.4L13.2 6.8H10.2Z" fill="#b4b4b4"/></svg><svg style="left:1736px;top:111px" width="21" height="21" viewBox="0 0 21 21"><path d="M0.6 17L17.6 1.4M2.6 19.6L19.6 3.6" stroke="#b4b4b4" stroke-width="1.3"/><path d="M1 4.4 Q5 0.8 7.8 5.6" fill="none" stroke="#b4b4b4" stroke-width="1.2"/><path d="M0 2.2V6.4H4Z" fill="#b4b4b4"/><text x="10.2" y="18.2" font-family="Liberation Serif" font-weight="bold" font-size="12.5" fill="#b4b4b4">A</text><path d="M9 20.2H20" stroke="#b4b4b4" stroke-width="1.2"/></svg><svg style="left:1736px;top:146px" width="21" height="20" viewBox="0 0 21 20"><defs><radialGradient id="gGl" cx="0.4" cy="0.35" r="0.7"><stop offset="0" stop-color="#dcdcdc"/><stop offset="1" stop-color="#a6a6a6"/></radialGradient></defs><circle cx="8.4" cy="8.6" r="8" fill="url(#gGl)"/><path d="M5 3Q9 1 11 4Q9 7 6 7Q3 6 5 3ZM10 9Q14 8 15 11Q13 14 11 13Z" fill="#c6c6c6"/><g fill="none" stroke="#a2a2a2" stroke-width="2"><rect x="7" y="13.6" width="6.6" height="4.8" rx="2.4"/><rect x="12.6" y="13.6" width="6.6" height="4.8" rx="2.4"/></g></svg><svg style="left:1846px;top:86.5px" width="8" height="4.6" viewBox="0 0 8 4.6"><path d="M0 0H8L4 4.6Z" fill="#b9b9b9"/></svg><svg style="left:415px;top:188.8px" width="8" height="4.8" viewBox="0 0 8 4.8"><path d="M0 0H8L4 4.8Z" fill="#3c3c3c"/></svg><svg style="left:841px;top:188.8px" width="8" height="4.8" viewBox="0 0 8 4.8"><path d="M0 0H8L4 4.8Z" fill="#3c3c3c"/></svg><svg style="left:1259px;top:188.8px" width="8" height="4.8" viewBox="0 0 8 4.8"><path d="M0 0H8L4 4.8Z" fill="#3c3c3c"/></svg><svg style="left:1544px;top:188.8px" width="8" height="4.8" viewBox="0 0 8 4.8"><path d="M0 0H8L4 4.8Z" fill="#3c3c3c"/></svg><svg style="left:1777px;top:188.8px" width="8" height="4.8" viewBox="0 0 8 4.8"><path d="M0 0H8L4 4.8Z" fill="#3c3c3c"/></svg><svg style="left:1828px;top:17px" width="13" height="4" viewBox="0 0 13 4"><path d="M0.9 1.8H12" stroke="#555" stroke-width="1.9"/></svg><svg style="left:1860px;top:10px" width="15" height="12" viewBox="0 0 15 12"><path d="M5.3 4.2V1.2H13.6V7.4H10" fill="none" stroke="#595959" stroke-width="1.2"/><rect x="1.2" y="4.4" width="8.6" height="6.4" fill="none" stroke="#595959" stroke-width="1.2"/></svg><svg style="left:1894px;top:10px" width="13" height="12" viewBox="0 0 13 12"><path d="M1.4 1.2L11.2 10.8M11.2 1.2L1.4 10.8" stroke="#555" stroke-width="1.5"/></svg><svg style="left:1793px;top:43px" width="15" height="9" viewBox="0 0 15 9"><path d="M0.7 7.4L7.2 0.6L13.8 7.4H10.2L7.2 4.4L4.2 7.4Z" fill="#585858"/></svg><svg style="left:1818px;top:42px" width="20" height="19" viewBox="0 0 20 19"><circle cx="11" cy="8" r="6.2" fill="#e8f1f5" stroke="#363636" stroke-width="2.2"/><path d="M6.6 12.6L1.8 16.6" stroke="#363636" stroke-width="2.8" stroke-linecap="round"/></svg><svg style="left:1848px;top:41px" width="20" height="20" viewBox="0 0 20 20"><circle cx="10" cy="10" r="9.9" fill="#3c3c3c"/><path d="M10 4.4L17 7.8L10 11.2L3 7.8Z" fill="#fff"/><path d="M5.6 10.4V13.4Q10 16.6 14.4 13.4V10.4L10 12.6Z" fill="#fff"/><path d="M3.6 8.4V13.4" stroke="#fff" stroke-width="1.1"/></svg><svg style="left:1877px;top:48px" width="8" height="4.8" viewBox="0 0 8 4.8"><path d="M0 0H8L4 4.8Z" fill="#585858"/></svg><svg style="left:1895px;top:41px" width="20" height="20" viewBox="0 0 20 20"><circle cx="10" cy="10" r="9.9" fill="#3c3c3c"/><path d="M6.6 7.4Q6.8 4.2 10.2 4.2Q13.6 4.4 13.6 7.2Q13.6 9 11.6 10.2Q10.2 11 10.2 12.6" fill="none" stroke="#fff" stroke-width="2.2"/><circle cx="10.2" cy="15.6" r="1.4" fill="#fff"/></svg><svg style="left:12px;top:212px" width="18" height="25" viewBox="0 0 18 25"><g fill="#fdfdfd" stroke="#333" stroke-width="1.2"><rect x="1.6" y="1.6" width="5" height="5"/><rect x="1.6" y="10.2" width="5" height="5"/><rect x="11.8" y="10.2" width="5" height="5"/><rect x="1.6" y="18.8" width="5" height="5"/></g><path d="M4.1 6.6V10.2M4.1 15.2V18.8M6.6 12.7H11.8" stroke="#333" stroke-width="1.1"/></svg><svg style="left:95px;top:213px" width="26" height="26" viewBox="0 0 26 26"><g transform="translate(0.6,1)"><path d="M0.5 11 V2.6 Q0.5 0.5 2.6 0.5 H5.46 Q6.5 0.5 7.02 2.2 H10.6 Q12.5 2.2 12.5 4 V11 Z" fill="url(#gFold)" stroke="#d3ad63" stroke-width="1"/><path d="M0.5 11 H12.5" stroke="#c79d4e" stroke-width="1"/></g><g transform="translate(5,6.4)"><path d="M0.5 11 V2.6 Q0.5 0.5 2.6 0.5 H5.628 Q6.7 0.5 7.236 2.2 H11 Q12.9 2.2 12.9 4 V11 Z" fill="url(#gFold)" stroke="#d3ad63" stroke-width="1"/><path d="M0.5 11 H12.9" stroke="#c79d4e" stroke-width="1"/></g><g transform="translate(9.6,12.2)"><path d="M0.5 11.5 V2.6 Q0.5 0.5 2.6 0.5 H5.964 Q7.1 0.5 7.668 2.2 H11.8 Q13.7 2.2 13.7 4 V11.5 Z" fill="url(#gFold)" stroke="#d3ad63" stroke-width="1"/><path d="M0.5 11.5 H13.7" stroke="#c79d4e" stroke-width="1"/></g></svg><svg style="left:139px;top:216px" width="22" height="20" viewBox="0 0 22 20"><g transform="translate(0.5,1)"><path d="M0.5 17.3 V2.6 Q0.5 0.5 2.6 0.5 H8.568 Q10.2 0.5 11.016 2.2 H18 Q19.9 2.2 19.9 4 V17.3 Z" fill="url(#gFold)" stroke="#d3ad63" stroke-width="1"/><path d="M0.5 17.3 H19.9" stroke="#c79d4e" stroke-width="1"/></g><g transform="translate(10.6,11)" stroke="#1d5f86" stroke-width="1.1"><path d="M-3.6 0H3.6M0 -3.6V3.6M-2.5 -2.5L2.5 2.5M-2.5 2.5L2.5 -2.5"/></g><circle cx="10.6" cy="11" r="1.5" fill="#1d5f86"/></svg><svg style="left:17.5px;top:257.6px" width="11" height="8.6" viewBox="0 0 11 8.6"><path d="M0.2 0.2H10.6L5.4 8.2Z" fill="#8a8a8a"/></svg><svg style="left:17.5px;top:654.6px" width="11" height="8.6" viewBox="0 0 11 8.6"><path d="M0.2 0.2H10.6L5.4 8.2Z" fill="#8a8a8a"/></svg><svg style="left:142.5px;top:249px" width="20" height="25" viewBox="0 0 20 25"><path d="M0.8 0.8H13.6L18.8 5.8V23.6H0.8Z" fill="url(#gPage)" stroke="#b8bcc0" stroke-width="1"/><path d="M13.6 0.8V5.8H18.8" fill="#e2eaef" stroke="#b8bcc0" stroke-width="0.8"/><path d="M0.8 23.8H18.8" stroke="#8e9296" stroke-width="1.1"/><g fill="none" stroke="#8c8c8c" stroke-width="0.9"><circle cx="4.8" cy="8.8" r="1.3"/><circle cx="4.8" cy="13.8" r="1.3"/><circle cx="4.8" cy="18.6" r="1.3"/></g><path d="M8 8.8H15.6M8 13.8H15.6M8 18.6H15.6" stroke="#8c8c8c" stroke-width="1.1"/></svg><svg style="left:14px;top:283px" width="21" height="18" viewBox="0 0 21 18"><rect x="0.5" y="0.5" width="19.4" height="16.4" fill="#f3f7f9" stroke="#c2c6c9" stroke-width="1"/><path d="M0.5 17H20" stroke="#a9adb0" stroke-width="1"/><path d="M4.2 3.6H8V7.6H13.4V10.6H4.2Z" fill="#fdfdfd" stroke="#8f8f8f" stroke-width="1"/><rect x="9.4" y="14.2" width="10.6" height="2.8" fill="#2b8cc4"/><path d="M12 14.2V17M13.6 14.2V17" stroke="#d6ebf6" stroke-width="0.7"/></svg><svg style="left:39px;top:307px" width="26" height="20" viewBox="0 0 26 20"><g fill="#fdfdfd" stroke="#3c3c3c" stroke-width="1.2" stroke-linejoin="round"><path d="M5.4 0.9H20.4 Q23.6 1.8 24.4 5.6 L19.4 17.4 H3 L0.8 11.6Z"/><path d="M0.8 11.6H15.6L20.4 0.9M15.6 11.6L19.4 17.4M22.8 3L17.8 15" fill="none"/></g></svg><svg style="left:16px;top:621px" width="6" height="9" viewBox="0 0 6 9"><path d="M5.4 0.6V8.4L0.6 4.5Z" fill="#8c8c8c"/></svg><svg style="left:124px;top:649px" width="28" height="21" viewBox="0 0 28 21"><g transform="scale(0.62,0.6) translate(0,-2)"><path d="M10.7 4.4H35 Q43 10.5 41.8 14 L32.7 31.9 H5.8 L2.4 21.5Z" fill="#6cb9d8"/><path d="M10.7 4.4H35L26 21.5H2.4Z" fill="url(#gSlabT)" stroke="#9fd6ea" stroke-width="1"/><path d="M2.4 21.5H26L32.7 31.9H5.8Z" fill="#e4f6fc" stroke="#9fd6ea" stroke-width="1"/><path d="M35 4.4 Q38.5 5 41.8 12.6 L32.7 31.9 L26 21.5Z" fill="#86cbe5"/><path d="M39 7 Q41 9 41.8 12.6 L32.7 31.9 L30.5 28.5Z" fill="#62b3d4"/></g></svg><svg style="left:158.6px;top:656.4px" width="8" height="4.8" viewBox="0 0 8 4.8"><path d="M0 0H8L4 4.8Z" fill="#6a6a6a"/></svg><svg style="left:15px;top:681.5px" width="17" height="15.5" viewBox="0 0 17 15.5"><path d="M0.6 3.6L3.6 0.6H16V11.6L13 14.6H0.6Z" fill="#6fc6e8" stroke="#1b7fb0" stroke-width="1" stroke-linejoin="round"/><path d="M0.6 3.6H13V14.6M13 3.6L16 0.6" fill="none" stroke="#1b7fb0" stroke-width="0.9"/><rect x="1.1" y="4.1" width="11.4" height="10" fill="#9ddcf3"/></svg><svg style="left:38.6px;top:707px" width="19" height="11" viewBox="0 0 19 11"><path d="M4.4 0.8H17.8L14 9.8H0.9Z" fill="none" stroke="#8a6a30" stroke-width="1.3" stroke-linejoin="round"/></svg><svg style="left:38.6px;top:731px" width="19" height="11" viewBox="0 0 19 11"><path d="M4.4 0.8H17.8L14 9.8H0.9Z" fill="none" stroke="#8a6a30" stroke-width="1.3" stroke-linejoin="round"/></svg><svg style="left:38.6px;top:755px" width="19" height="11" viewBox="0 0 19 11"><path d="M4.4 0.8H17.8L14 9.8H0.9Z" fill="none" stroke="#8a6a30" stroke-width="1.3" stroke-linejoin="round"/></svg><svg style="left:38px;top:774px" width="22" height="21" viewBox="0 0 22 21"><g stroke="#8a6a30" stroke-width="1.2"><path d="M1.4 9.8H15.6M5.4 1.6L13.8 19.6M12.8 1.4L5 19.4"/></g><text x="0.6" y="6.2" font-family="Liberation Sans" font-weight="bold" font-size="6.5" fill="#222">y</text><text x="16.4" y="12.2" font-family="Liberation Sans" font-weight="bold" font-size="6.5" fill="#222">x</text><text x="0.6" y="19.8" font-family="Liberation Sans" font-weight="bold" font-size="6.5" fill="#222">z</text></svg><svg style="left:38.6px;top:799px" width="21" height="20" viewBox="0 0 21 20"><path d="M0.6 7.6L8 0.6H20.2V11.4L12.6 19H0.6Z" fill="#fafafa"/><path d="M0.6 7.6L8 0.6H20.2L12.6 7.6Z" fill="#bfe4f3"/><path d="M12.6 7.6L20.2 0.6V11.4L12.6 19Z" fill="#58a8cd"/><path d="M14 8.6L19 3.8V10.6L14 15.6Z" fill="#8ecbe5"/><rect x="0.6" y="7.6" width="12" height="11.4" fill="#f3f3f3" stroke="#cdcdcd" stroke-width="0.8"/><path d="M0.6 19.2H12.6" stroke="#9f9f9f" stroke-width="1"/></svg><svg style="left:38.6px;top:823px" width="21" height="20" viewBox="0 0 21 20"><path d="M0.6 7.6L8 0.6H20.2V11.4L12.6 19H0.6Z" fill="#fafafa"/><path d="M0.6 7.6L8 0.6H20.2L12.6 7.6Z" fill="#bfe4f3"/><path d="M12.6 7.6L20.2 0.6V11.4L12.6 19Z" fill="#58a8cd"/><path d="M14 8.6L19 3.8V10.6L14 15.6Z" fill="#8ecbe5"/><rect x="0.6" y="7.6" width="12" height="11.4" fill="#f3f3f3" stroke="#cdcdcd" stroke-width="0.8"/><path d="M0.6 19.2H12.6" stroke="#9f9f9f" stroke-width="1"/></svg><svg style="left:38.6px;top:871px" width="21" height="20" viewBox="0 0 21 20"><path d="M0.6 7.6L8 0.6H20.2V11.4L12.6 19H0.6Z" fill="#fafafa"/><path d="M0.6 7.6L8 0.6H20.2L12.6 7.6Z" fill="#bfe4f3"/><path d="M12.6 7.6L20.2 0.6V11.4L12.6 19Z" fill="#58a8cd"/><path d="M14 8.6L19 3.8V10.6L14 15.6Z" fill="#8ecbe5"/><rect x="0.6" y="7.6" width="12" height="11.4" fill="#f3f3f3" stroke="#cdcdcd" stroke-width="0.8"/><path d="M0.6 19.2H12.6" stroke="#9f9f9f" stroke-width="1"/></svg><svg style="left:38.6px;top:848px" width="21" height="20" viewBox="0 0 21 20"><path d="M0.6 6.6L7 0.8H20.2V12L13.4 18.6H0.6Z" fill="#f4f4f4" stroke="#cfcfcf" stroke-width="0.8"/><path d="M13.4 6.8L20.2 0.8V12L13.4 18.6Z" fill="#dcdcdc"/><path d="M0.6 6.6H13.4V18.6" fill="none" stroke="#cfcfcf" stroke-width="0.8"/><path d="M4.6 18.6V7.6Q4.2 4.4 7.8 4.2H10.6Q13.8 4.2 13 7.4L11.6 9V18.6" fill="#d4effa" stroke="#2a93c6" stroke-width="1.4" stroke-linejoin="round"/><path d="M6.4 8.2Q8.6 9.6 11.2 8.2" fill="none" stroke="#2a93c6" stroke-width="1"/></svg><svg style="left:38.6px;top:895px" width="21" height="20" viewBox="0 0 21 20"><path d="M0.6 19V8Q0.6 4.2 5 3.2L10 0.8Q17 2.8 20 11.6V14L14.6 19Z" fill="#ededed"/><path d="M5 3.2L10 0.8Q17 2.8 20 11.6L14.8 15.6Q13 6 5 3.2Z" fill="#aee0f5"/><path d="M10 0.8Q17 2.8 20 11.6L18 13Q15.6 4.6 8 1.8Z" fill="#5bb6de"/><path d="M14.8 15.6L20 11.6V14L14.6 19Z" fill="#d9d9d9"/></svg><svg style="left:939px;top:221px" width="24" height="24" viewBox="0 0 24 24"><rect x="1.5" y="1.5" width="17.4" height="17.6" fill="#fbfbfb" stroke="#c2c2c2" stroke-width="1"/><path d="M1.5 2H19" stroke="#b2b2b2" stroke-width="1.4"/><path d="M1.5 19.4H14" stroke="#a8a8a8" stroke-width="1"/><path d="M14.18 13.88L19.4 19" stroke="#a8a8a8" stroke-width="3" stroke-linecap="round"/><path d="M14.18 13.88L19.4 19" stroke="#dedede" stroke-width="1.2" stroke-linecap="round"/><circle cx="10.4" cy="10.1" r="5.4" fill="#f2fbfe" stroke="#2b8dbb" stroke-width="1.4"/></svg><svg style="left:970px;top:221px" width="24" height="24" viewBox="0 0 24 24"><path d="M14.36 13.26L20.4 19.2" stroke="#a8a8a8" stroke-width="3" stroke-linecap="round"/><path d="M14.36 13.26L20.4 19.2" stroke="#dedede" stroke-width="1.2" stroke-linecap="round"/><circle cx="9.6" cy="8.5" r="6.8" fill="#f2fbfe" stroke="#2b8dbb" stroke-width="1.4"/><path d="M5.6 8.5H13.6M9.6 4.5V12.5" stroke="#0f5e8a" stroke-width="2.3"/></svg><svg style="left:1002px;top:221px" width="24" height="24" viewBox="0 0 24 24"><path d="M14.36 13.26L20.4 19.2" stroke="#a8a8a8" stroke-width="3" stroke-linecap="round"/><path d="M14.36 13.26L20.4 19.2" stroke="#dedede" stroke-width="1.2" stroke-linecap="round"/><circle cx="9.6" cy="8.5" r="6.8" fill="#f2fbfe" stroke="#2b8dbb" stroke-width="1.4"/><path d="M5.8 8.5H13.4" stroke="#0f5e8a" stroke-width="2.3"/></svg><svg style="left:1036px;top:222px" width="20" height="20" viewBox="0 0 20 20"><defs><linearGradient id="gRp" x1="0" y1="0" x2="1" y2="1"><stop offset="0.3" stop-color="#bfe3ee"/><stop offset="1" stop-color="#3f97b4"/></linearGradient></defs><rect x="0.5" y="0.5" width="19" height="18.6" fill="url(#gRp)" stroke="#a6a6a6" stroke-width="1"/><path d="M0.5 1H19.5" stroke="#9c9c9c" stroke-width="1.4"/><path d="M1 2H5Q13 3 17 8.6L5 18.6H1Z" fill="#fdfdfd"/><path d="M4.6 18.2L16.4 8" stroke="#1d6c8e" stroke-width="1.7"/><path d="M3.4 18.8L7 15.6L7.8 17.6Z" fill="#14506c"/><path d="M0.5 19.2H19.5" stroke="#8c8c8c" stroke-width="1"/></svg><svg style="left:1067px;top:221px" width="26" height="26" viewBox="0 0 26 26"><path d="M1 3.6L4.6 0.8H21V17L17.6 20.6H1Z" fill="#fdfdfd" stroke="#7fc6e2" stroke-width="1"/><path d="M1 3.6L4.6 0.8H21L17.6 3.6Z" fill="#b6e2f2"/><path d="M17.6 3.6L21 0.8V17L17.6 20.6Z" fill="#58aacf"/><rect x="1" y="3.6" width="16.6" height="17" fill="#fefefe" stroke="#86cbe6" stroke-width="1"/><path d="M24.6 20.6V23.8H21.4Z" fill="#555"/></svg><svg style="left:1100px;top:221px" width="26" height="26" viewBox="0 0 26 26"><path d="M1 3.6L4.6 0.8H19V16L15.6 19.6H1Z" fill="#e6e6e6"/><path d="M1 3.6L4.6 0.8H19L15.6 3.6Z" fill="#dcdcdc"/><path d="M15.6 3.6L19 0.8V16L15.6 19.6Z" fill="#cfcfcf"/><rect x="1" y="3.6" width="14.6" height="16" fill="#e9e9e9"/><rect x="11" y="9.4" width="9.4" height="11.4" fill="#e4e4e4" stroke="#bdbdbd" stroke-width="0.9"/><path d="M12.6 12.4H14.6M15.8 12.4H18.8M12.6 15H14.6M15.8 15H18.8M12.6 17.6H14.6M15.8 17.6H18.8" stroke="#b2b2b2" stroke-width="1"/><path d="M24.6 20.6V23.8H21.4Z" fill="#555"/></svg><svg style="left:1133px;top:221px" width="26" height="26" viewBox="0 0 26 26"><g stroke="#8a6a30" stroke-width="1.5"><path d="M1 1.6L5.6 6.2M5.6 1.6L1 6.2"/><path d="M12.8 1L11 5M9 8.6L7 12.8M5.2 16L3.4 20" stroke-width="1.7"/><path d="M10 14.6H20.6M12.6 9.4L18 19.8M18 9.4L12.6 19.8"/></g><path d="M25.2 20.4V23.6H22Z" fill="#555"/></svg><svg style="left:183px;top:1017px" width="14" height="10" viewBox="0 0 14 10"><path d="M6.6 0.6V8.6L0.6 4.6Z M13 0.6V8.6L6.8 4.6Z" fill="#555"/></svg><svg style="left:206px;top:1016px" width="10" height="12" viewBox="0 0 10 12"><path d="M9.4 0.8V11.4L0.8 6.1Z" fill="#adadad"/></svg><svg style="left:226px;top:1016px" width="10" height="12" viewBox="0 0 10 12"><path d="M0.6 0.8V11.4L9.2 6.1Z" fill="#adadad"/></svg><svg style="left:246px;top:1017px" width="14" height="10" viewBox="0 0 14 10"><path d="M0.6 0.6V8.6L6.6 4.6Z M6.8 0.6V8.6L12.8 4.6Z" fill="#555"/></svg><svg style="left:14px;top:1051px" width="18" height="22" viewBox="0 0 18 22"><g fill="#fdfdfd" stroke="#333" stroke-width="1"><rect x="2.6" y="1.8" width="4" height="4"/><rect x="2.6" y="9.2" width="4" height="4"/><rect x="11.6" y="9.2" width="4" height="4"/><rect x="2.6" y="16.4" width="4" height="4"/></g><path d="M4.6 5.8V9.2M4.6 13.2V16.4M6.6 11.2H11.6" stroke="#333" stroke-width="1"/></svg><svg style="left:276px;top:1017.6px" width="10" height="10" viewBox="0 0 10 10"><path d="M0.4 4.8H9.4M4.9 0.3V9.3" stroke="#3a3a3a" stroke-width="1.5"/></svg><svg style="left:39px;top:1051px" width="23" height="22" viewBox="0 0 23 22"><defs><radialGradient id="gGlobe" cx="0.38" cy="0.32" r="0.75"><stop offset="0" stop-color="#bfe6fa"/><stop offset="0.5" stop-color="#3ea3e0"/><stop offset="1" stop-color="#1668b0"/></radialGradient></defs><circle cx="11.4" cy="11" r="8.6" fill="url(#gGlobe)"/><path d="M7 5.4Q10 3.6 12 5.6Q11 8.6 8.4 9.2Q5.6 8.4 7 5.4ZM12 10.6Q15.6 9.4 17 12Q16 15.6 13 16Q11 13.6 12 10.6Z" fill="#9fd6f4" opacity="0.85"/><ellipse cx="11.4" cy="11" rx="12" ry="4.6" transform="rotate(-38 11.4 11)" fill="none" stroke="#5a5a5a" stroke-width="1.3"/><path d="M3.6 13.4A8.6 8.6 0 0 1 17.6 5" fill="none" stroke="#3ea3e0" stroke-width="2.6" opacity="0.0"/></svg><svg style="left:70px;top:1052px" width="21" height="21" viewBox="0 0 21 21"><defs><linearGradient id="gSq" x1="0" y1="0" x2="0.6" y2="1"><stop offset="0.2" stop-color="#ffffff"/><stop offset="1" stop-color="#cfe3ee"/></linearGradient></defs><rect x="0.8" y="0.8" width="18.8" height="18.6" fill="url(#gSq)" stroke="#2180aa" stroke-width="1.3"/><path d="M0.4 19.8H20" stroke="#14668c" stroke-width="1"/></svg><svg style="left:107px;top:1051px" width="14" height="15" viewBox="0 0 14 15"><path d="M0.8 4.6H6.6V0.8L13 7.4L6.6 14V10.2H0.8Z" fill="#2f9bd2" stroke="#1a5f86" stroke-width="1" stroke-linejoin="round"/></svg><svg style="left:1408px;top:1053px" width="34" height="14" viewBox="0 0 34 14"><circle cx="6.2" cy="6.8" r="6.3" fill="#44d44a"/><circle cx="18.4" cy="6.8" r="3.2" fill="#d2d2d2"/><circle cx="27.2" cy="6.8" r="3.2" fill="#d2d2d2"/></svg><svg style="left:1496px;top:1050px" width="23" height="20" viewBox="0 0 23 20"><defs><linearGradient id="gBn" x1="0" y1="0" x2="1" y2="0"><stop offset="0" stop-color="#262626"/><stop offset="0.5" stop-color="#9c9c9c"/><stop offset="1" stop-color="#333"/></linearGradient></defs><path d="M1.4 19V11.4L4.8 4.2V1.8H8.6V4.2L10 8V19Z" fill="url(#gBn)"/><path d="M21.2 19V11.4L17.8 4.2V1.8H14V4.2L12.6 8V19Z" fill="url(#gBn)"/><rect x="9.4" y="5.6" width="3.8" height="5.6" fill="#4a4a4a"/><rect x="4.8" y="1.4" width="3.8" height="1.6" fill="#3a3a3a"/><rect x="14" y="1.4" width="3.8" height="1.6" fill="#3a3a3a"/><rect x="1.4" y="17.2" width="8.6" height="2" fill="#1e1e1e"/><rect x="12.6" y="17.2" width="8.6" height="2" fill="#1e1e1e"/></svg><svg style="left:1527.6px;top:1058.4px" width="8" height="4.8" viewBox="0 0 8 4.8"><path d="M0 0H8L4 4.8Z" fill="#555"/></svg><svg style="left:1884.6px;top:1058.4px" width="8" height="4.8" viewBox="0 0 8 4.8"><path d="M0 0H8L4 4.8Z" fill="#555"/></svg><div class="t" style="left:822.5px;top:8px;font-size:16.6px;color:#202020;transform:scaleX(0.9508)">DRW0001</div><div class="t" style="left:901.7px;top:8px;font-size:16.6px;color:#202020;transform:scaleX(0.9618)">(Active)</div><div class="t" style="left:962.9px;top:8px;font-size:16.6px;color:#202020;transform:scaleX(0.9220)">-</div><div class="t" style="left:974.3px;top:8px;font-size:16.6px;color:#202020;transform:scaleX(1.0203)">Creo</div><div class="t" style="left:1016.7px;top:8px;font-size:16.6px;color:#202020;transform:scaleX(0.9971)">Parametric</div><div class="t" style="left:31px;top:44px;font-size:18.2px;color:#ffffff;transform:scaleX(0.8870)">File</div><div class="t" style="left:112px;top:44px;font-size:18.2px;color:#1d2330;transform:scaleX(0.9522)">Layout</div><div class="t" style="left:215px;top:44px;font-size:18.2px;color:#3a4350;transform:scaleX(0.9429)">Table</div><div class="t" style="left:305px;top:44px;font-size:18.2px;color:#3a4350;transform:scaleX(1.0026)">Annotate</div><div class="t" style="left:427px;top:44px;font-size:18.2px;color:#3a4350;transform:scaleX(0.9171)">Sketch</div><div class="t" style="left:528px;top:44px;font-size:18.2px;color:#3a4350;transform:scaleX(0.9818)">Legacy Migration</div><div class="t" style="left:713px;top:44px;font-size:18.2px;color:#3a4350;transform:scaleX(0.9449)">Analysis</div><div class="t" style="left:827px;top:44px;font-size:18.2px;color:#3a4350;transform:scaleX(0.9054)">Review</div><div class="t" style="left:930px;top:44px;font-size:18.2px;color:#3a4350;transform:scaleX(0.9890)">Tools</div><div class="t" style="left:1022px;top:44px;font-size:18.2px;color:#3a4350;transform:scaleX(0.9464)">View</div><div class="t" style="left:1108px;top:44px;font-size:18.2px;color:#3a4350;transform:scaleX(0.9675)">Framework</div><div class="t" style="left:10.5px;top:130px;font-size:15.4px;color:#323a47;transform:scaleX(0.9374)">Lock View</div><div class="t" style="left:8.5px;top:150px;font-size:15.4px;color:#323a47;transform:scaleX(0.9811)">Movement</div><div class="t" style="left:114px;top:79px;font-size:15.4px;color:#323a47;transform:scaleX(0.9429)">New Sheet</div><div class="t" style="left:114px;top:113px;font-size:15.4px;color:#323a47;transform:scaleX(0.9325)">Sheet Setup</div><div class="t" style="left:114px;top:147px;font-size:15.4px;color:#323a47;transform:scaleX(0.9459)">Move or Copy Sheets</div><div class="t" style="left:98px;top:182px;font-size:15.4px;color:#323a47;transform:scaleX(0.9693)">Document</div><div class="t" style="left:271px;top:130px;font-size:15.4px;color:#323a47;transform:scaleX(0.9508)">Images</div><div class="t" style="left:354px;top:79px;font-size:15.4px;color:#323a47;transform:scaleX(1.0132)">Import Drawing/Data</div><div class="t" style="left:354px;top:113px;font-size:15.4px;color:#323a47;transform:scaleX(0.9891)">Object</div><div class="t" style="left:354px;top:147px;font-size:15.4px;color:#323a47;transform:scaleX(0.9743)">Copy from Other Drawing</div><div class="t" style="left:374px;top:182px;font-size:15.4px;color:#323a47;transform:scaleX(0.9351)">Insert</div><div class="t" style="left:543px;top:130px;font-size:15.4px;color:#323a47;transform:scaleX(0.9565)">Drawing</div><div class="t" style="left:545px;top:150px;font-size:15.4px;color:#323a47;transform:scaleX(0.9874)">Models</div><div class="t" style="left:608px;top:130px;font-size:15.4px;color:#323a47;transform:scaleX(0.9130)">General</div><div class="t" style="left:617px;top:150px;font-size:15.4px;color:#323a47;transform:scaleX(0.9669)">View</div><div class="t" style="left:682px;top:130px;font-size:15.4px;color:#323a47;transform:scaleX(0.9386)">Replace</div><div class="t" style="left:669px;top:150px;font-size:15.4px;color:#323a47;transform:scaleX(0.9838)">View Model</div><div class="t" style="left:783px;top:79px;font-size:15.4px;color:#323a47;transform:scaleX(0.9736)">Projection View</div><div class="t" style="left:783px;top:113px;font-size:15.4px;color:#323a47;transform:scaleX(0.9912)">Detailed View</div><div class="t" style="left:783px;top:147px;font-size:15.4px;color:#323a47;transform:scaleX(0.9737)">Auxiliary View</div><div class="t" style="left:922px;top:79px;font-size:15.4px;color:#323a47;transform:scaleX(0.9455)">Revolved View</div><div class="t" style="left:922px;top:113px;font-size:15.4px;color:#a9adb2;transform:scaleX(0.9724)">Copy and Align View</div><div class="t" style="left:922px;top:147px;font-size:15.4px;color:#323a47;transform:scaleX(0.9700)">Drawing View</div><div class="t" style="left:752px;top:182px;font-size:15.4px;color:#323a47;transform:scaleX(0.9772)">Model Views</div><div class="t" style="left:1101px;top:79px;font-size:15.4px;color:#323a47;transform:scaleX(0.9753)">Component Display</div><div class="t" style="left:1101px;top:113px;font-size:15.4px;color:#323a47;transform:scaleX(0.9593)">Edge Display</div><div class="t" style="left:1101px;top:147px;font-size:15.4px;color:#a9adb2;transform:scaleX(0.9605)">Arrows</div><div class="t" style="left:1267px;top:79px;font-size:15.4px;color:#a9adb2;transform:scaleX(0.9822)">Hatch/Fill</div><div class="t" style="left:1267px;top:113px;font-size:15.4px;color:#a9adb2;transform:scaleX(0.9699)">Convert to Draft Group</div><div class="t" style="left:1267px;top:147px;font-size:15.4px;color:#323a47;transform:scaleX(0.9673)">Move to Sheet</div><div class="t" style="left:1228px;top:182px;font-size:15.4px;color:#323a47;transform:scaleX(0.9423)">Edit</div><div class="t" style="left:1461.3px;top:79px;font-size:15.4px;color:#323a47;transform:scaleX(0.9126)">Erase view</div><div class="t" style="left:1461.3px;top:113px;font-size:15.4px;color:#a9adb2;transform:scaleX(0.9264)">Resume View</div><div class="t" style="left:1461.3px;top:147px;font-size:15.4px;color:#323a47;transform:scaleX(0.9720)">Show Modified Edges</div><div class="t" style="left:1490px;top:182px;font-size:15.4px;color:#323a47;transform:scaleX(0.9709)">Display</div><div class="t" style="left:1630px;top:130px;font-size:15.4px;color:#a9adb2;transform:scaleX(0.9563)">Text</div><div class="t" style="left:1627px;top:150px;font-size:15.4px;color:#a9adb2;transform:scaleX(0.9059)">Style</div><div class="t" style="left:1679px;top:130px;font-size:15.4px;color:#a9adb2;transform:scaleX(0.8932)">Line</div><div class="t" style="left:1677px;top:150px;font-size:15.4px;color:#a9adb2;transform:scaleX(0.9059)">Style</div><div class="t" style="left:1761px;top:79px;font-size:15.4px;color:#a9adb2;transform:scaleX(0.9531)">Arrow Style</div><div class="t" style="left:1761px;top:113px;font-size:15.4px;color:#a9adb2;transform:scaleX(0.9411)">Repeat Last Format</div><div class="t" style="left:1761px;top:147px;font-size:15.4px;color:#a9adb2;transform:scaleX(0.9820)">Hyperlink</div><div class="t" style="left:1727px;top:182px;font-size:15.4px;color:#323a47;transform:scaleX(0.9436)">Format</div><div class="t" style="left:38.5px;top:216px;font-size:15.3px;color:#2f3a4a;transform:scaleX(1.0212)">Mo</div><div class="t" style="left:61.6px;top:216px;font-size:15.3px;color:#2f3a4a;transform:scaleX(0.5490)">...</div><div class="t" style="left:36.2px;top:252px;font-size:15.4px;color:#2a2f38;font-weight:bold;transform:scaleX(0.9503)">Drawing</div><div class="t" style="left:101.5px;top:252px;font-size:15.4px;color:#2a2f38;font-weight:bold;transform:scaleX(0.9385)">Tr...</div><div class="t" style="left:45.1px;top:283px;font-size:13.5px;color:#2b323e;transform:scaleX(0.9277)">Sheet 1 of DRW0001.</div><div class="t" style="left:70.4px;top:307px;font-size:13.5px;color:#14181e;transform:scaleX(0.8587)">new_view_4</div><div class="t" style="left:36.2px;top:649px;font-size:15.4px;color:#2a2f38;font-weight:bold;transform:scaleX(0.9692)">Model</div><div class="t" style="left:84.5px;top:649px;font-size:15.4px;color:#2a2f38;font-weight:bold;transform:scaleX(1.0139)">Tr...</div><div class="t" style="left:40.3px;top:680px;font-size:13.5px;color:#323a47;transform:scaleX(0.8529)">WIDGET.PRT</div><div class="t" style="left:65.2px;top:704px;font-size:13.5px;color:#323a47;transform:scaleX(0.8452)">RIGHT</div><div class="t" style="left:65.2px;top:728px;font-size:13.5px;color:#323a47;transform:scaleX(0.8432)">TOP</div><div class="t" style="left:65.2px;top:752px;font-size:13.5px;color:#323a47;transform:scaleX(0.8688)">FRONT</div><div class="t" style="left:65.2px;top:776px;font-size:13.5px;color:#323a47;transform:scaleX(0.7835)">PRT_CSYS_DEF</div><div class="t" style="left:65.2px;top:800px;font-size:13.5px;color:#323a47;transform:scaleX(0.9170)">Extrude 1</div><div class="t" style="left:65.2px;top:824px;font-size:13.5px;color:#323a47;transform:scaleX(0.9170)">Extrude 2</div><div class="t" style="left:65.2px;top:848px;font-size:13.5px;color:#323a47;transform:scaleX(0.9300)">Hole 1</div><div class="t" style="left:65.2px;top:872px;font-size:13.5px;color:#323a47;transform:scaleX(0.9170)">Extrude 3</div><div class="t" style="left:65.2px;top:896px;font-size:13.5px;color:#323a47;transform:scaleX(0.9227)">Round 1</div><div class="t" style="left:192px;top:985px;font-size:12.2px;color:#9b9da1;transform:scaleX(0.9736)">SCALE : 3.000</div><div class="t" style="left:290px;top:985px;font-size:12.2px;color:#9b9da1;transform:scaleX(0.9881)">TYPE : PART</div><div class="t" style="left:379px;top:985px;font-size:12.2px;color:#9b9da1;transform:scaleX(0.9668)">NAME : WIDGET</div><div class="t" style="left:486px;top:985px;font-size:12.2px;color:#9b9da1;transform:scaleX(1.0003)">SIZE : A2</div><div class="t" style="left:311.9px;top:1012px;font-size:15.4px;color:#23272e;font-weight:bold;transform:scaleX(0.9553)">Sheet 1</div><div class="t" style="left:123.3px;top:1050px;font-size:13.6px;color:#252a33;transform:scaleX(0.8840)">Select</div><div class="t" style="left:160.4px;top:1050px;font-size:13.6px;color:#252a33;transform:scaleX(0.8284)">CENTER</div><div class="t" style="left:210.4px;top:1050px;font-size:13.6px;color:#252a33;transform:scaleX(0.8689)">POINT</div><div class="t" style="left:250px;top:1050px;font-size:13.6px;color:#252a33;transform:scaleX(1.0268)">for</div><div class="t" style="left:270.4px;top:1050px;font-size:13.6px;color:#252a33;transform:scaleX(0.9641)">drawing</div><div class="t" style="left:320.4px;top:1050px;font-size:13.6px;color:#252a33;transform:scaleX(0.9096)">view.</div><div class="t" style="left:1548px;top:1051px;font-size:15.2px;color:#2b323e;transform:scaleX(0.9533)">1 selected</div><div class="t" style="left:1679px;top:1051px;font-size:15.2px;color:#2b323e;transform:scaleX(0.9344)">General</div><div class="t" style="left:1339.3px;top:868px;font-size:23.84px;color:#2b0b63;font-weight:bold;transform:scaleX(0.7082)">WIDGET</div><div class="t" style="left:1370.3px;top:902px;font-size:18.6px;color:#2b0b63;font-weight:bold;transform:scaleX(0.7357)">198-12345-123</div><div class="t" style="left:1167px;top:869px;font-size:13.37px;color:#2b0b63;font-weight:bold;transform:scaleX(0.6547)">John</div><div class="t" style="left:1164.2px;top:891px;font-size:12.35px;color:#2b0b63;font-weight:bold;transform:scaleX(0.6998)">James</div><div class="t" style="left:1171.2px;top:913px;font-size:12.35px;color:#2b0b63;font-weight:bold;transform:scaleX(0.6015)">Jim</div><div class="t" style="left:1282.7px;top:917px;font-size:10.9px;color:#2b0b63;font-weight:bold;transform:scaleX(0.9279)">3.000</div><div class="t" style="left:1449.8px;top:917px;font-size:10.61px;color:#2b0b63;font-weight:bold;transform:scaleX(0.7450)">1</div><div class="t" style="left:1145.2px;top:822px;font-size:7.74px;color:#f6f61e;font-weight:bold;font-family:'Liberation Mono',monospace;transform:scaleX(0.7645)">GENERAL TOLERANCES UNLESS NOTED</div><div class="t" style="left:1147.3px;top:837px;font-size:9.71px;color:#f6f61e;font-weight:bold;font-family:'Liberation Mono',monospace;transform:scaleX(0.7726)">.XXX</div><div class="t" style="left:1190px;top:837px;font-size:9.71px;color:#f6f61e;font-weight:bold;font-family:'Liberation Mono',monospace;transform:scaleX(0.7614)">.XX</div><div class="t" style="left:1222.1px;top:836px;font-size:10.77px;color:#f6f61e;font-weight:bold;font-family:'Liberation Mono',monospace;transform:scaleX(0.7532)">ANGLES</div><div class="t" style="left:1269.9px;top:826px;font-size:17.91px;color:transparent;font-weight:bold;-webkit-text-stroke:0.9px #fbfcfd;font-family:'Liberation Mono',monospace;transform:scaleX(0.8806)">PTC</div><div class="t" style="left:1310.7px;top:824px;font-size:12.9px;color:#f6f61e;font-weight:normal;font-family:'Liberation Mono',monospace;transform:scaleX(0.8150)">PARAMETRIC TECHNOLOGY</div><div class="t" style="left:1351.3px;top:833px;font-size:6.83px;color:#f6f61e;font-weight:bold;font-family:'Liberation Mono',monospace;transform:scaleX(1.0515)">WALTHAM, MA</div><div class="t" style="left:1263.5px;top:847px;font-size:11.99px;color:#f6f61e;font-weight:normal;font-family:'Liberation Mono',monospace;transform:scaleX(0.7644)">PART</div><div class="t" style="left:1143px;top:863px;font-size:6.37px;color:#f6f61e;font-weight:bold;font-family:'Liberation Mono',monospace;transform:scaleX(0.8956)">DRAWN</div><div class="t" style="left:1217.8px;top:862px;font-size:6.37px;color:#f6f61e;font-weight:bold;font-family:'Liberation Mono',monospace;transform:scaleX(0.8385)">DATE</div><div class="t" style="left:1142.4px;top:884px;font-size:6.53px;color:#f6f61e;font-weight:bold;font-family:'Liberation Mono',monospace;transform:scaleX(0.8986)">CHECKED</div><div class="t" style="left:1217.8px;top:885px;font-size:6.37px;color:#f6f61e;font-weight:bold;font-family:'Liberation Mono',monospace;transform:scaleX(0.8385)">DATE</div><div class="t" style="left:1143px;top:907px;font-size:7.13px;color:#f6f61e;font-weight:bold;font-family:'Liberation Mono',monospace;transform:scaleX(0.8241)">APPROVED</div><div class="t" style="left:1217.8px;top:906px;font-size:7.13px;color:#f6f61e;font-weight:bold;font-family:'Liberation Mono',monospace;transform:scaleX(0.7481)">DATE</div><div class="t" style="left:1263px;top:885px;font-size:7.44px;color:#f6f61e;font-weight:bold;font-family:'Liberation Mono',monospace;transform:scaleX(0.7559)">SIZE</div><div class="t" style="left:1287.6px;top:885px;font-size:7.44px;color:#f6f61e;font-weight:bold;font-family:'Liberation Mono',monospace;transform:scaleX(0.8192)">FSCM NO</div><div class="t" style="left:1358px;top:884px;font-size:6.68px;color:#f6f61e;font-weight:bold;font-family:'Liberation Mono',monospace;transform:scaleX(0.8514)">DRAWING NO.</div><div class="t" style="left:1269px;top:898px;font-size:16.24px;color:#f6f61e;font-weight:normal;font-family:'Liberation Mono',monospace;transform:scaleX(0.7385)">A2</div><div class="t" style="left:1263.7px;top:917px;font-size:7.59px;color:#f6f61e;font-weight:bold;font-family:'Liberation Mono',monospace;transform:scaleX(0.7253)">SCALE</div><div class="t" style="left:1424.3px;top:917px;font-size:7.59px;color:#f6f61e;font-weight:bold;font-family:'Liberation Mono',monospace;transform:scaleX(0.7341)">SHEET</div><div class="t" style="left:664.8px;top:274px;font-size:10.32px;color:#f6f61e;font-weight:normal;font-family:'Liberation Mono',monospace;transform:scaleX(0.7093)">1</div><div class="t" style="left:779.8px;top:274px;font-size:10.32px;color:#f6f61e;font-weight:normal;font-family:'Liberation Mono',monospace;transform:scaleX(0.7093)">2</div><div class="t" style="left:880.8px;top:274px;font-size:10.32px;color:#f6f61e;font-weight:normal;font-family:'Liberation Mono',monospace;transform:scaleX(0.7093)">3</div><div class="t" style="left:981.8px;top:274px;font-size:10.32px;color:#f6f61e;font-weight:normal;font-family:'Liberation Mono',monospace;transform:scaleX(0.7093)">4</div><div class="t" style="left:1074.8px;top:274px;font-size:10.32px;color:#f6f61e;font-weight:normal;font-family:'Liberation Mono',monospace;transform:scaleX(0.7093)">5</div><div class="t" style="left:1172.8px;top:274px;font-size:10.32px;color:#f6f61e;font-weight:normal;font-family:'Liberation Mono',monospace;transform:scaleX(0.7093)">6</div><div class="t" style="left:1278.8px;top:274px;font-size:10.32px;color:#f6f61e;font-weight:normal;font-family:'Liberation Mono',monospace;transform:scaleX(0.7093)">7</div><div class="t" style="left:1367.8px;top:274px;font-size:10.32px;color:#f6f61e;font-weight:normal;font-family:'Liberation Mono',monospace;transform:scaleX(0.7093)">8</div><div class="t" style="left:1453.8px;top:274px;font-size:10.32px;color:#f6f61e;font-weight:normal;font-family:'Liberation Mono',monospace;transform:scaleX(0.7093)">9</div><div class="t" style="left:608.8px;top:318px;font-size:10.32px;color:#f6f61e;font-weight:normal;font-family:'Liberation Mono',monospace;transform:scaleX(0.7093)">A</div><div class="t" style="left:608.8px;top:401px;font-size:10.32px;color:#f6f61e;font-weight:normal;font-family:'Liberation Mono',monospace;transform:scaleX(0.7093)">B</div><div class="t" style="left:608.8px;top:498px;font-size:10.32px;color:#f6f61e;font-weight:normal;font-family:'Liberation Mono',monospace;transform:scaleX(0.7093)">C</div><div class="t" style="left:608.8px;top:604px;font-size:10.32px;color:#f6f61e;font-weight:normal;font-family:'Liberation Mono',monospace;transform:scaleX(0.7093)">D</div><div class="t" style="left:608.8px;top:701px;font-size:10.32px;color:#f6f61e;font-weight:normal;font-family:'Liberation Mono',monospace;transform:scaleX(0.7093)">E</div><div class="t" style="left:608.8px;top:796px;font-size:10.32px;color:#f6f61e;font-weight:normal;font-family:'Liberation Mono',monospace;transform:scaleX(0.7093)">F</div><div class="t" style="left:608.8px;top:886px;font-size:10.32px;color:#f6f61e;font-weight:normal;font-family:'Liberation Mono',monospace;transform:scaleX(0.7093)">G</div><div class="b" style="left:166.8px;top:288.4px;width:1.2px;height:8.6px;background:#4a515c;"></div></div></body></html>
